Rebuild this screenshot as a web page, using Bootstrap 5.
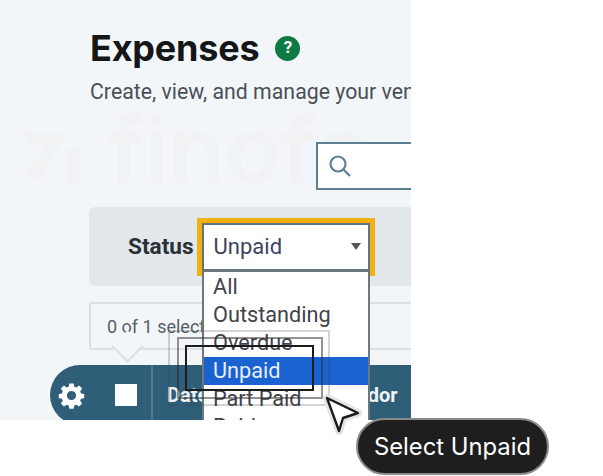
<!DOCTYPE html>
<html lang="en">
<head>
  <meta charset="UTF-8">
  <meta name="viewport" content="width=device-width, initial-scale=1.0">
  <title>Expenses</title>
  <link href="https://cdn.jsdelivr.net/npm/bootstrap@5.3.0/dist/css/bootstrap.min.css" rel="stylesheet">
  <style>
    body {
        background: #fff;
        overflow: hidden;
    }
    .app-pane {
        position: relative;
        width: 411px;
        height: 420px;
        overflow: hidden;
        background: #f3f6f8;
        font-family: Roboto, sans-serif;
    }
    .page-head {
        padding: 27px 0 0 90px;
        white-space: nowrap;
    }
    .page-title {
        font-family: Inter, sans-serif;
        font-size: 36px;
        line-height: 42px;
        font-weight: 700;
        letter-spacing: -0.2px;
        color: #141618;
        margin: 0;
    }
    .help-dot {
        width: 25px;
        height: 25px;
        background: #0d7a45;
        color: #fff;
        font-size: 17px;
        font-weight: 700;
        margin-left: 16px;
    }
    .page-sub {
        font-size: 21.3px;
        line-height: 28px;
        color: #4a4f57;
        margin: 9px 0 0;
        width: 321px;
        overflow: hidden;
    }
    .search-row {
        padding: 36px 0 0 316px;
    }
    .search-box {
        width: 140px;
        height: 48px;
        background: #fff;
        border: 2px solid #5d7f92;
        padding-left: 10px;
    }
    .filter-band {
        margin: 17px 0 0 89px;
        height: 79px;
        width: 340px;
        background: #e1e7eb;
        border-radius: 6px 0 0 6px;
        padding-left: 39px;
    }
    .filter-label {
        font-size: 22.6px;
        font-weight: 700;
        color: #2b2f36;
    }
    .status-wrap {
        width: 178px;
        height: 58px;
        margin-left: 3px;
        border: 5px solid #f2b10f;
    }
    .status-inner {
        height: 100%;
        background: #fff;
        border: 2px solid #5f7482;
        padding: 0 7px 0 10px;
        font-size: 22px;
        color: #3a4560;
    }
    .caret-down {
        width: 0;
        height: 0;
        border-left: 5px solid transparent;
        border-right: 5px solid transparent;
        border-top: 7px solid #555;
    }
    .count-box {
        position: relative;
        margin: 16px 0 0 89px;
        width: 330px;
        height: 48px;
        border: 2px solid #dbe0e3;
        background: #f3f6f8;
        padding-left: 16px;
        font-size: 18px;
        color: #55606a;
    }
    .count-tail {
        position: absolute;
        left: 25px;
        top: 31px;
        width: 23px;
        height: 23px;
        background: #f3f6f8;
        border-right: 2px solid #dbe0e3;
        border-bottom: 2px solid #dbe0e3;
        transform: rotate(45deg);
    }
    .table-head {
        position: relative;
        margin: 15px 0 0 50px;
        width: 400px;
        height: 60px;
        background: #2f5f78;
        border-radius: 30px 0 0 30px;
        color: #f1f4f6;
        font-size: 20px;
        font-weight: 700;
    }
    .gear-cell {
        width: 44px;
        margin-left: -1px;
        justify-content: center;
    }
    .check-square {
        width: 22px;
        height: 22px;
        background: #fff;
        margin-left: 22px;
    }
    .head-sep {
        width: 2px;
        height: 100%;
        background: #517a90;
        margin-left: 14px;
    }
    .head-date {
        margin-left: 14px;
        width: 148px;
    }
    .head-vendor {
        margin-left: 18px;
    }
    .status-menu {
        position: absolute;
        left: 202px;
        top: 270px;
        width: 168px;
        height: 170px;
        background: #fff;
        border: 2px solid #6d7780;
        font-size: 21.7px;
        line-height: 28px;
        color: #3f4349;
    }
    .menu-item {
        height: 28px;
        padding-left: 9px;
        margin-top: 1px;
        margin-bottom: -1px;
    }
    .menu-item.picked {
        background: #1a62d0;
        color: #e6eefb;
    }
    .watermark {
        position: absolute;
        left: 108px;
        top: 95px;
        font-family: Inter, sans-serif;
        font-size: 92px;
        line-height: 110px;
        font-weight: 600;
        color: #f0f2f4;
    }
    .watermark-mark {
        position: absolute;
        left: 24px;
        top: 128px;
    }
    .hl-box {
        position: absolute;
    }
    .hl-1 {
        left: 168px;
        top: 330px;
        width: 162px;
        height: 76px;
        border: 2px solid rgba(60, 60, 60, 0.22);
    }
    .hl-2 {
        left: 177px;
        top: 337px;
        width: 146px;
        height: 62px;
        border: 2px solid rgba(40, 40, 40, 0.5);
    }
    .hl-3 {
        left: 185px;
        top: 345px;
        width: 129px;
        height: 46px;
        border: 2px solid #1c1c1c;
    }
    .cursor-mark {
        position: absolute;
        left: 320px;
        top: 390px;
    }
    .action-pill {
        position: absolute;
        left: 356px;
        top: 418px;
        width: 193px;
        height: 57px;
        background: #1e1e1e;
        border: 2px solid #8a8a8a;
        border-radius: 29px;
        color: #fff;
        font-family: Inter, sans-serif;
        font-size: 23.8px;
    }
  </style>
</head>
<body>
  <div class="app-pane">
    <svg class="watermark-mark" width="60" height="60" viewBox="0 0 60 60">
      <path d="M2 4h38v6L16 52 2 44 24 16H2z" fill="#f0f2f4"/>
      <rect x="43" y="20" width="12" height="36" fill="#f0f2f4"/>
    </svg>
    <div class="watermark">finofo</div>

    <div class="position-relative">
      <div class="page-head">
        <div class="d-flex align-items-center">
          <h1 class="page-title">Expenses</h1>
          <span class="help-dot rounded-circle d-flex align-items-center justify-content-center">?</span>
        </div>
        <p class="page-sub">Create, view, and manage your vendor expenses</p>
      </div>

      <div class="search-row">
        <div class="search-box d-flex align-items-center">
          <svg width="24" height="24" viewBox="0 0 24 24" fill="none" stroke="#5d7f92" stroke-width="2.2">
            <circle cx="10" cy="10" r="7.5"/>
            <path d="M15.5 15.5l6.5 6.5"/>
          </svg>
        </div>
      </div>

      <div class="filter-band d-flex align-items-center">
        <span class="filter-label">Status</span>
        <div class="status-wrap">
          <div class="status-inner d-flex align-items-center justify-content-between">
            <span>Unpaid</span>
            <span class="caret-down"></span>
          </div>
        </div>
      </div>

      <div class="count-box d-flex align-items-center">
        <span>0 of 1 selected</span>
        <span class="count-tail"></span>
      </div>

      <div class="table-head d-flex align-items-center">
        <div class="gear-cell d-flex">
          <svg width="29" height="29" viewBox="0 0 24 24" fill="#fff">
            <path fill-rule="evenodd" d="M10.2 2h3.6l.5 2.7 1.7.7 2.3-1.6 2.5 2.5-1.6 2.3.7 1.7 2.6.5v3.4l-2.6.5-.7 1.7 1.6 2.3-2.5 2.5-2.3-1.6-1.7.7-.5 2.7h-3.6l-.5-2.7-1.7-.7-2.3 1.6-2.5-2.5 1.6-2.3-.7-1.7-2.6-.5v-3.4l2.6-.5.7-1.7-1.6-2.3 2.5-2.5 2.3 1.6 1.7-.7zM12 8.2a3.8 3.8 0 1 0 0 7.6 3.8 3.8 0 0 0 0-7.6z"/>
          </svg>
        </div>
        <span class="check-square"></span>
        <span class="head-sep"></span>
        <span class="head-date">Date</span>
        <span class="head-vendor">Vendor</span>
      </div>
    </div>

    <div class="status-menu">
      <div class="menu-item">All</div>
      <div class="menu-item">Outstanding</div>
      <div class="menu-item">Overdue</div>
      <div class="menu-item picked">Unpaid</div>
      <div class="menu-item">Part Paid</div>
      <div class="menu-item">Paid</div>
    </div>

    <div class="hl-box hl-1"></div>
    <div class="hl-box hl-2"></div>
    <div class="hl-box hl-3"></div>
  </div>

  <svg class="cursor-mark" width="46" height="48" viewBox="0 0 46 48">
    <path d="M7 8l31 15-15 5-4 13z" fill="#fff" stroke="#e4e4e4" stroke-width="8" stroke-linejoin="round"/>
    <path d="M7 8l31 15-15 5-4 13z" fill="#fff" stroke="#1c1c1c" stroke-width="2.4" stroke-linejoin="round"/>
  </svg>

  <div class="action-pill d-flex align-items-center justify-content-center">Select Unpaid</div>

  <script src="https://cdn.jsdelivr.net/npm/bootstrap@5.3.0/dist/js/bootstrap.bundle.min.js"></script>
</body>
</html>
